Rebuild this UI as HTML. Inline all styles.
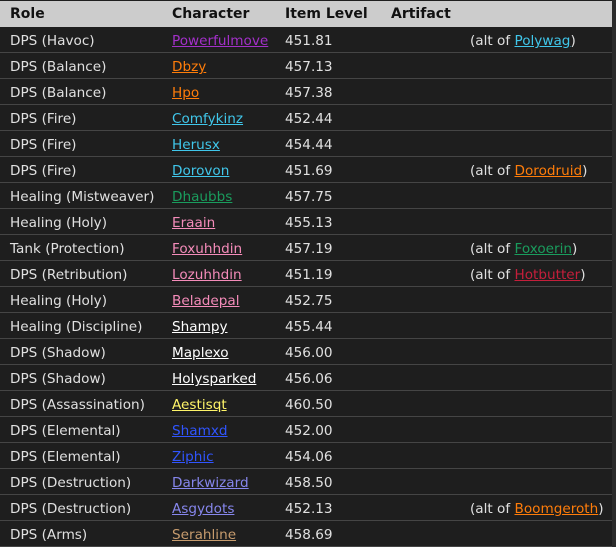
<!DOCTYPE html><html><head><style>
body{margin:0;background:#2b2b2b;width:616px;height:547px;overflow:hidden;font-family:"DejaVu Sans","Liberation Sans",sans-serif;font-size:13.6px;color:#e0e0e0}
#t{position:absolute;left:0;top:0;width:612px;height:547px;background:#1e1e1e}
.h{position:absolute;left:0;top:1px;width:612px;height:26px;background:#cccccc;color:#111;font-weight:bold;font-size:14px}
.r{position:absolute;left:0;width:612px;height:25px;border-bottom:1px solid #454545}
.c{position:absolute;top:6px;white-space:nowrap}
a{text-decoration:underline}
.r .c:nth-child(1),.h .c:nth-child(1){left:10px}
.r .c:nth-child(2),.h .c:nth-child(2){left:172px}
.r .c:nth-child(3),.h .c:nth-child(3){left:285px}
.h .c:nth-child(4){left:391px}
.r .c:nth-child(4){left:470px}
.dh{color:#a330c9}.dr{color:#ff7d0a}.mg{color:#40c7eb}.mk{color:#1a9c5d}.pa{color:#f58cba}.dk{color:#c41f3b}.pr{color:#fff}.ro{color:#fff569}.sh{color:#3055ff}.wl{color:#8787ed}.wa{color:#c79c6e}
</style></head><body><div id="t">
<div class="h"><span class="c" style="top:5px">Role</span><span class="c" style="top:5px">Character</span><span class="c" style="top:5px">Item Level</span><span class="c" style="top:5px">Artifact</span></div>
<div class="r" style="top:27px"><span class="c">DPS (Havoc)</span><span class="c"><a class="dh">Powerfulmove</a></span><span class="c">451.81</span><span class="c">(alt of <a class="mg">Polywag</a>)</span></div>
<div class="r" style="top:53px"><span class="c">DPS (Balance)</span><span class="c"><a class="dr">Dbzy</a></span><span class="c">457.13</span></div>
<div class="r" style="top:79px"><span class="c">DPS (Balance)</span><span class="c"><a class="dr">Hpo</a></span><span class="c">457.38</span></div>
<div class="r" style="top:105px"><span class="c">DPS (Fire)</span><span class="c"><a class="mg">Comfykinz</a></span><span class="c">452.44</span></div>
<div class="r" style="top:131px"><span class="c">DPS (Fire)</span><span class="c"><a class="mg">Herusx</a></span><span class="c">454.44</span></div>
<div class="r" style="top:157px"><span class="c">DPS (Fire)</span><span class="c"><a class="mg">Dorovon</a></span><span class="c">451.69</span><span class="c">(alt of <a class="dr">Dorodruid</a>)</span></div>
<div class="r" style="top:183px"><span class="c">Healing (Mistweaver)</span><span class="c"><a class="mk">Dhaubbs</a></span><span class="c">457.75</span></div>
<div class="r" style="top:209px"><span class="c">Healing (Holy)</span><span class="c"><a class="pa">Eraain</a></span><span class="c">455.13</span></div>
<div class="r" style="top:235px"><span class="c">Tank (Protection)</span><span class="c"><a class="pa">Foxuhhdin</a></span><span class="c">457.19</span><span class="c">(alt of <a class="mk">Foxoerin</a>)</span></div>
<div class="r" style="top:261px"><span class="c">DPS (Retribution)</span><span class="c"><a class="pa">Lozuhhdin</a></span><span class="c">451.19</span><span class="c">(alt of <a class="dk">Hotbutter</a>)</span></div>
<div class="r" style="top:287px"><span class="c">Healing (Holy)</span><span class="c"><a class="pa">Beladepal</a></span><span class="c">452.75</span></div>
<div class="r" style="top:313px"><span class="c">Healing (Discipline)</span><span class="c"><a class="pr">Shampy</a></span><span class="c">455.44</span></div>
<div class="r" style="top:339px"><span class="c">DPS (Shadow)</span><span class="c"><a class="pr">Maplexo</a></span><span class="c">456.00</span></div>
<div class="r" style="top:365px"><span class="c">DPS (Shadow)</span><span class="c"><a class="pr">Holysparked</a></span><span class="c">456.06</span></div>
<div class="r" style="top:391px"><span class="c">DPS (Assassination)</span><span class="c"><a class="ro">Aestisqt</a></span><span class="c">460.50</span></div>
<div class="r" style="top:417px"><span class="c">DPS (Elemental)</span><span class="c"><a class="sh">Shamxd</a></span><span class="c">452.00</span></div>
<div class="r" style="top:443px"><span class="c">DPS (Elemental)</span><span class="c"><a class="sh">Ziphic</a></span><span class="c">454.06</span></div>
<div class="r" style="top:469px"><span class="c">DPS (Destruction)</span><span class="c"><a class="wl">Darkwizard</a></span><span class="c">458.50</span></div>
<div class="r" style="top:495px"><span class="c">DPS (Destruction)</span><span class="c"><a class="wl">Asgydots</a></span><span class="c">452.13</span><span class="c">(alt of <a class="dr">Boomgeroth</a>)</span></div>
<div class="r" style="top:521px"><span class="c">DPS (Arms)</span><span class="c"><a class="wa">Serahline</a></span><span class="c">458.69</span></div>
</div></body></html>
